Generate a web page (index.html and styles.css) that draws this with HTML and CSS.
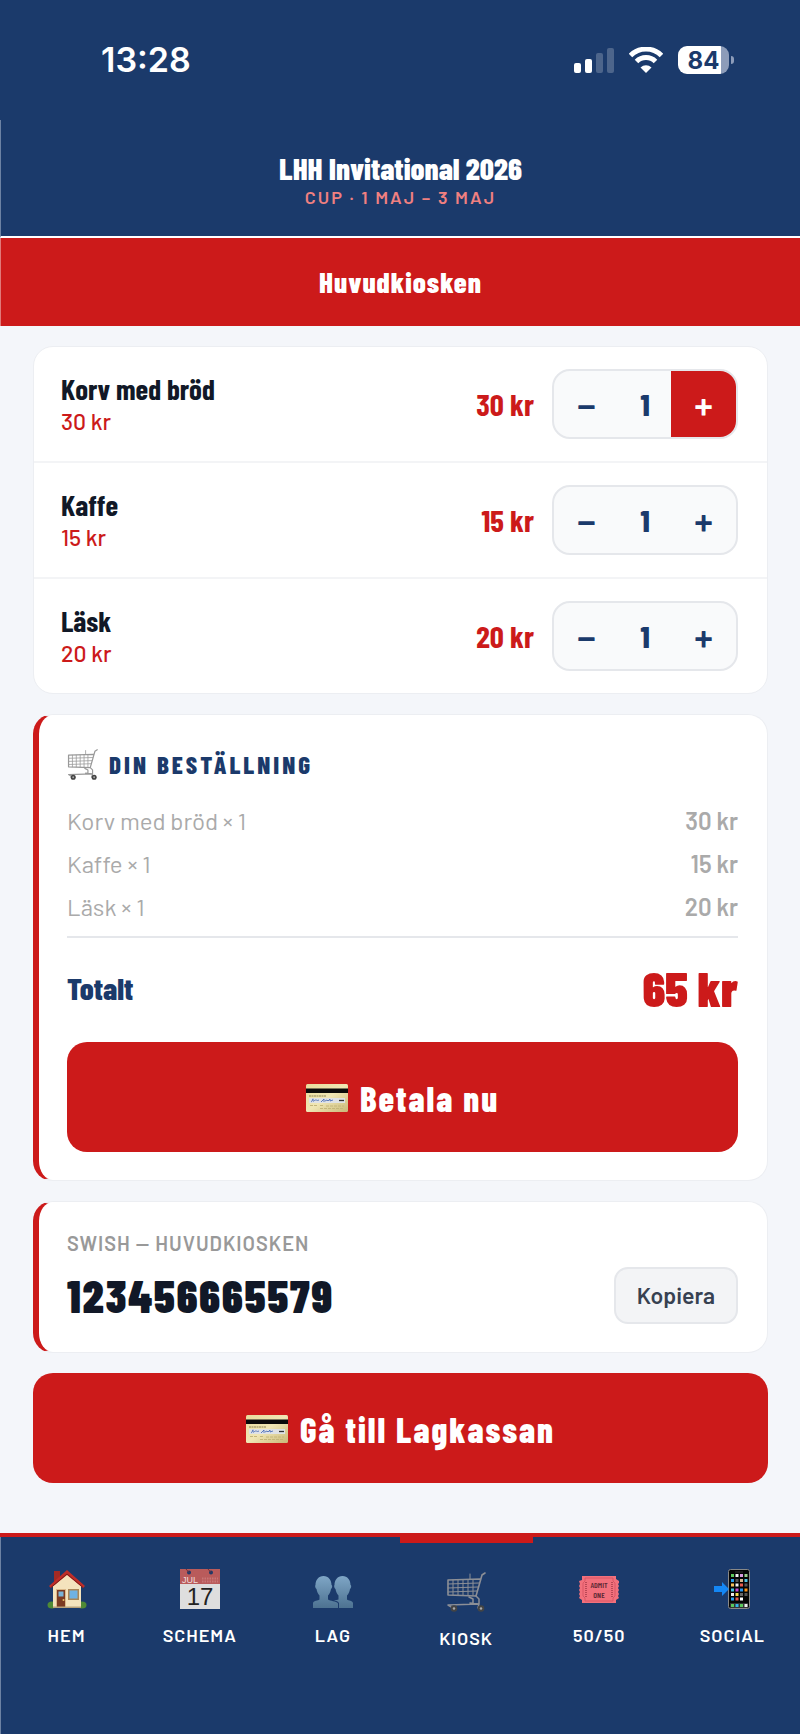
FILE: index.html
```html
<!DOCTYPE html>
<html lang="sv">
<head>
    <meta charset="UTF-8">
    <meta name="viewport" content="width=device-width, initial-scale=1">
    <title>LHH Invitational 2026 - Huvudkiosken</title>
    <link rel="stylesheet" href="styles.css">
</head>
<body>
    <!-- shared icons -->
    <svg class="sprite" width="0" height="0" aria-hidden="true">
        <symbol id="icon-cart" viewBox="0 0 40 40">
            <g fill="none" stroke="currentColor" stroke-linecap="round" stroke-linejoin="round">
                <path d="M39 1l-3 2-6 21-28-1V8l32-1" stroke-width="1.6"/>
                <path d="M2 12l31-1M2 16l30-1M2 20l29-1M7 8v15M12 8v15M17 8v15M22 8v15M27 8v15M24 7V2" stroke-width="1"/>
                <path d="M23 25l4 2v4M30 24l3 3v5L2 33l5 3M24 31l9 1-1 4" stroke-width="1.5"/>
            </g>
            <g fill="#444">
                <circle cx="8" cy="36.500" r="3.300"/>
                <circle cx="35" cy="36.500" r="3.300"/>
            </g>
            <circle cx="8" cy="36.500" r="1.200" fill="#aaa"/>
            <circle cx="35" cy="36.500" r="1.200" fill="#aaa"/>
        </symbol>
        <symbol id="icon-card" viewBox="0 0 42 28">
            <linearGradient id="gold" x1="0" y1="0" x2="1" y2="1">
                <stop offset="0" stop-color="#e9dc9c"/>
                <stop offset="0.5" stop-color="#f0e6b4"/>
                <stop offset="1" stop-color="#c9b877"/>
            </linearGradient>
            <rect width="42" height="28" rx="1.500" fill="url(#gold)"/>
            <rect y="4.500" width="42" height="4.500" fill="#0a0a0a"/>
            <path d="M3 12h17" stroke="#8d8352" stroke-width="1" stroke-dasharray="2 .5"/>
            <rect x="3" y="14" width="36" height="5" fill="#dfe2e6"/>
            <path d="M5 18c1 0 2-4 2-3s0 3 1 2 1-1 2-1 1 1 3 0M15 18l3-3v3M19 17l2-1 1 1 2-2v2l3-1" fill="none" stroke="#3c62b4" stroke-width=".8"/>
            <path d="M33 16.500h5" stroke="#333" stroke-width="1.300"/>
            <path d="M4 21.500h7M14 21.500h4M14 24.500h24M20 22h18" stroke="#c4b67a" stroke-width="1" stroke-dasharray="3 1"/>
        </symbol>
    </svg>

    <div class="statusbar">
        <span class="clock">13:28</span>
        <div class="status-icons">
            <svg width="40" height="26" viewBox="0 0 40 26" fill="#fff" aria-hidden="true">
                <rect y="16" width="7" height="10" rx="2"/>
                <rect x="11" y="12" width="7" height="14" rx="2"/>
                <rect x="22" y="6" width="7" height="20" rx="2" opacity=".22"/>
                <rect x="33" y="1" width="7" height="25" rx="2" opacity=".22"/>
            </svg>
            <svg width="34" height="26" viewBox="0 0 34 26" aria-hidden="true">
                <g fill="none" stroke="#fff" stroke-width="5">
                    <path d="M1.500 8.500a22 22 0 0 1 31 0"/>
                    <path d="M7.500 14.500a13.500 13.500 0 0 1 19 0"/>
                </g>
                <path d="M11.500 20.500a8 8 0 0 1 11 0L17 26z" fill="#fff"/>
            </svg>
            <span class="battery">84</span>
        </div>
    </div>

    <header class="header">
        <h1>LHH Invitational 2026</h1>
        <p>CUP · 1 MAJ – 3 MAJ</p>
    </header>

    <div class="banner">
        <h2>Huvudkiosken</h2>
    </div>

    <main class="content">
        <section class="card products">
            <div class="product">
                <div class="product-info">
                    <h3>Korv med bröd</h3>
                    <p>30 kr</p>
                </div>
                <span class="product-sum">30 kr</span>
                <div class="stepper">
                    <button type="button" aria-label="Minska">−</button>
                    <output>1</output>
                    <button type="button" class="pressed" aria-label="Öka">+</button>
                </div>
            </div>
            <div class="product">
                <div class="product-info">
                    <h3>Kaffe</h3>
                    <p>15 kr</p>
                </div>
                <span class="product-sum">15 kr</span>
                <div class="stepper">
                    <button type="button" aria-label="Minska">−</button>
                    <output>1</output>
                    <button type="button" aria-label="Öka">+</button>
                </div>
            </div>
            <div class="product">
                <div class="product-info">
                    <h3>Läsk</h3>
                    <p>20 kr</p>
                </div>
                <span class="product-sum">20 kr</span>
                <div class="stepper">
                    <button type="button" aria-label="Minska">−</button>
                    <output>1</output>
                    <button type="button" aria-label="Öka">+</button>
                </div>
            </div>
        </section>

        <section class="card accent">
            <h2 class="order-title">
                <svg width="31" height="31" aria-hidden="true"><use href="#icon-cart"/></svg>
                DIN BESTÄLLNING
            </h2>
            <ul class="order-lines">
                <li><span>Korv med bröd × 1</span><strong>30 kr</strong></li>
                <li><span>Kaffe × 1</span><strong>15 kr</strong></li>
                <li><span>Läsk × 1</span><strong>20 kr</strong></li>
            </ul>
            <div class="total">
                <span>Totalt</span>
                <strong>65 kr</strong>
            </div>
            <button type="button" class="btn-primary">
                <svg width="42" height="28" aria-hidden="true"><use href="#icon-card"/></svg>
                Betala nu
            </button>
        </section>

        <section class="card accent">
            <p class="swish-label">SWISH — HUVUDKIOSKEN</p>
            <div class="swish-row">
                <span class="swish-number">123456665579</span>
                <button type="button" class="btn-copy">Kopiera</button>
            </div>
        </section>

        <button type="button" class="btn-primary">
            <svg width="42" height="28" aria-hidden="true"><use href="#icon-card"/></svg>
            Gå till Lagkassan
        </button>
    </main>

    <nav class="tabbar">
        <a href="#hem">
            <svg width="40" height="40" viewBox="0 0 40 40" aria-hidden="true">
                <ellipse cx="5" cy="36" rx="4.500" ry="3.500" fill="#4f8a35"/>
                <ellipse cx="35" cy="36" rx="4.500" ry="3.500" fill="#4f8a35"/>
                <path d="M7 2h6v13H7z" fill="#a32a23"/>
                <path d="M6 15L20 4l14 11v24H6z" fill="#f4e3bd"/>
                <path d="M2 17L20 1l18 16-2 2L20 6 4 19z" fill="#bf2d28"/>
                <path d="M4 18.500L20 5l16 13.500" fill="none" stroke="#7c1b18" stroke-width="1"/>
                <path d="M9 20h10v18H9z" fill="#dbb98a"/>
                <path d="M10 21h8v17h-8z" fill="#7b3a22"/>
                <path d="M11.500 22.500h5v5h-5z" fill="#79b4d9"/>
                <circle cx="16.500" cy="31" r="1" fill="#e9c46a"/>
                <path d="M21 20h11v11H21z" fill="#a98657"/>
                <path d="M22.500 21.500h8v8h-8z" fill="#6fb2e3"/>
                <path d="M6 37.500h28V39H6z" fill="#b9a27a"/>
            </svg>
            <span>HEM</span>
        </a>
        <a href="#schema">
            <svg width="40" height="40" viewBox="0 0 40 40" aria-hidden="true">
                <rect width="40" height="40" fill="#dedede"/>
                <rect width="40" height="15" fill="#b95b5b"/>
                <circle cx="9" cy="3.500" r="2" fill="#1b3a6b"/>
                <circle cx="31" cy="3.500" r="2" fill="#1b3a6b"/>
                <path d="M6 0l3 3.500M28 0l3 3.500" stroke="#772f35"/>
                <text x="2" y="13.500" class="cal-month">JUL</text>
                <path d="M22 9.500h16M22 12.500h16" stroke="#c87676" stroke-width="2" stroke-dasharray="1.500 1"/>
                <text x="20" y="36" class="cal-day">17</text>
            </svg>
            <span>SCHEMA</span>
        </a>
        <a href="#lag">
            <svg width="40" height="40" viewBox="0 0 40 40" aria-hidden="true">
                <linearGradient id="people" x1="0" y1="0" x2="0" y2="1">
                    <stop offset="0" stop-color="#7fa6c6"/>
                    <stop offset="1" stop-color="#4d7291"/>
                </linearGradient>
                <g fill="url(#people)">
                    <path d="M10.500 7c5 0 8 4 8 9 1 0 1 3-.5 4-.5 3-1.500 5-3 6.500v4c2 2 8 1 10 4v4.500H0V34c1-3 5-2 6.500-3.500v-4C5 25 4 23 3.500 20 2 19 2 16 2.500 16c0-5 3-9 8-9z"/>
                    <path d="M29.500 7c5 0 8 4 8 9 1 0 1 3-.5 4-.5 3-1.500 5-3 6.500v4c1.500 1.500 5 .5 6 3.500v5H26V34c-1-2-4-2.500-5-3 2 0 3.500 0 4.500-.5v-4c-1.500-1.500-2.500-3.500-3-6.500-1.500-1-1.500-4-1-4 0-5 3-9 8-9z"/>
                </g>
            </svg>
            <span>LAG</span>
        </a>
        <a href="#kiosk" class="active">
            <svg width="40" height="40" aria-hidden="true"><use href="#icon-cart"/></svg>
            <span>KIOSK</span>
        </a>
        <a href="#lotteri">
            <svg width="40" height="40" viewBox="0 0 40 40" aria-hidden="true">
                <path d="M3 7h34v3l3 2v2l-1 1 1 2-1 2 1 2-1 2 1 2-1 2 1 2-3 2v3H3v-3l-3-2 1-2-1-2 1-2-1-2 1-2-1-2 1-2-1-3 3-1z" fill="#f2707c"/>
                <path d="M6 9h28v3l2 2v13l-2 2v3H6v-3l-2-2V14l2-2z" fill="none" stroke="#d4505f" stroke-width=".8"/>
                <path d="M7 13v15M33 13v15" stroke="#a63b49" stroke-width="1.500" stroke-dasharray="1 1"/>
                <text x="20" y="18.500" class="ticket-text">ADMIT</text>
                <text x="20" y="28.500" class="ticket-text">ONE</text>
            </svg>
            <span>50/50</span>
        </a>
        <a href="#social">
            <svg width="40" height="40" viewBox="0 0 40 40" aria-hidden="true">
                <rect x="16.500" y=".5" width="21" height="39" rx="2" fill="#050505" stroke="#888"/>
                <path d="M23 3h8" stroke="#333"/>
                <g fill="none" stroke-width="3">
                    <path d="M19 6.500h3" stroke="#5bc95b"/><path d="M23.500 6.500h3" stroke="#eee"/><path d="M28 6.500h3" stroke="#d99be0"/><path d="M32.500 6.500h3" stroke="#9ad18b"/>
                    <path d="M19 11.500h3" stroke="#2a9ff0"/><path d="M23.500 11.500h3" stroke="#555"/><path d="M28 11.500h3" stroke="#d8b68c"/><path d="M32.500 11.500h3" stroke="#4ec7e8"/>
                    <path d="M19 16h3" stroke="#f5c05a"/><path d="M23.500 16h3" stroke="#eee"/><path d="M28 16h3" stroke="#e75a4d"/><path d="M32.500 16h3" stroke="#555"/>
                    <path d="M19 21h3" stroke="#44c4e4"/><path d="M23.500 21h3" stroke="#c648d8"/><path d="M28 21h3" stroke="#2695ee"/><path d="M32.500 21h3" stroke="#ff9417"/>
                    <path d="M19 25.500h3" stroke="#eee"/><path d="M23.500 25.500h3" stroke="#f4dc52"/><path d="M28 25.500h3" stroke="#666"/><path d="M32.500 25.500h3" stroke="#555"/>
                    <path d="M19 30h3" stroke="#2a9ff0"/><path d="M23.500 30h3" stroke="#e75a4d"/><path d="M28 30h3" stroke="#fff"/>
                </g>
                <path d="M18 34h18v5H18z" fill="#333"/>
                <g fill="none" stroke-width="3">
                    <path d="M19 36.500h3" stroke="#5bc95b"/><path d="M23.500 36.500h3" stroke="#35b5e8"/><path d="M28 36.500h3" stroke="#5bc95b"/><path d="M32.500 36.500h3" stroke="#eee"/>
                </g>
                <path d="M2 17h8v-4l7 7-7 7v-4H2z" fill="#1487f5"/>
            </svg>
            <span>SOCIAL</span>
        </a>
    </nav>
</body>
</html>
```
FILE: styles.css
```css
:root {
    --navy: #1b3a6b;
    --red: #cc1a1a;
    --ink: #111827;
    --line: #e5e7eb;
    --condensed: "Barlow Condensed", "Roboto Condensed", "Liberation Sans Narrow", Roboto, sans-serif;
}
* {
    box-sizing: border-box;
}
body {
    display: flex;
    flex-direction: column;
    min-height: 100vh;
    margin: 0;
    background: #f4f6fa;
    color: var(--ink);
    font-family: Barlow, Roboto, sans-serif;
}
h1, h2, h3, p, ul {
    margin: 0;
    padding: 0;
}
button {
    border: 0;
    font-family: inherit;
    cursor: pointer;
}
.sprite {
    position: absolute;
}

/* status bar */
.statusbar {
    display: flex;
    justify-content: space-between;
    align-items: center;
    height: 120px;
    padding: 0 71px 0 101px;
    background: var(--navy);
    color: #fff;
}
.clock {
    font: 600 34px/40px Inter, sans-serif;
}
.status-icons {
    display: flex;
    align-items: center;
    gap: 15px;
}
.battery {
    position: relative;
    width: 51px;
    height: 28px;
    border-radius: 9px;
    background: linear-gradient(to right, #fff 84%, #8d9cb9 84%);
    color: var(--navy);
    font: 700 24px/29px Inter, sans-serif;
    text-align: center;
}
.battery::after {
    content: "";
    position: absolute;
    top: 10px;
    right: -5px;
    width: 3px;
    height: 8px;
    border-radius: 0 3px 3px 0;
    background: #8d9cb9;
}

/* header */
.header {
    padding: 32px 0 26px;
    border-left: 1px solid #6d82a3;
    border-bottom: 2px solid #fff;
    background: var(--navy);
    text-align: center;
}
.header h1 {
    color: #fff;
    font: 800 31px/32px var(--condensed);
}
.header p {
    color: #f08080;
    font-size: 18px;
    font-weight: 600;
    line-height: 26px;
    letter-spacing: 2px;
}
.banner {
    padding: 24px 0;
    border-left: 1px solid #e07a7a;
    background: var(--red);
    color: #fff;
    text-align: center;
}
.banner h2 {
    font: 800 29px/40px var(--condensed);
    letter-spacing: 1px;
}

/* cards */
.content {
    flex: 1;
    display: flex;
    flex-direction: column;
    gap: 20px;
    padding: 20px 32px 48px 33px;
}
.card {
    border: 1px solid #eceef2;
    border-radius: 20px;
    background: #fff;
}
.accent {
    padding: 28px 29px 28px 28px;
    border-left: 6px solid var(--red);
}
.product {
    display: flex;
    align-items: center;
    padding: 22px 29px 22px 27px;
}
.product + .product {
    border-top: 2px solid #f3f4f6;
}
.product-info {
    flex: 1;
}
.product-info h3 {
    font: 700 29px/34px var(--condensed);
}
.product-info p {
    color: var(--red);
    font-size: 23px;
    font-weight: 500;
    line-height: 30px;
}
.product-sum {
    margin-right: 18px;
    color: var(--red);
    font: 700 31px/36px var(--condensed);
}
.stepper {
    display: flex;
    height: 70px;
    border: 2px solid var(--line);
    border-radius: 18px;
    background: #f9fafb;
    overflow: hidden;
}
.stepper button {
    width: 65px;
    padding: 0;
    background: none;
    color: var(--navy);
    font-size: 38px;
    font-weight: 600;
}
.stepper .pressed {
    background: var(--red);
    color: #fff;
}
.stepper output {
    width: 52px;
    color: var(--navy);
    font: 800 31px/66px var(--condensed);
    text-align: center;
}

/* order */
.order-title {
    display: flex;
    align-items: center;
    gap: 11px;
    color: var(--navy);
    font: 800 25px/42px var(--condensed);
    letter-spacing: 3px;
}
.order-title svg {
    color: #999;
}
.order-lines {
    margin-top: 14px;
    padding-bottom: 8px;
    border-bottom: 2px solid var(--line);
    list-style: none;
}
.order-lines li {
    display: flex;
    justify-content: space-between;
    color: #aaa;
    font-size: 24px;
    line-height: 43px;
}
.order-lines strong {
    font-weight: 600;
}
.total {
    display: flex;
    justify-content: space-between;
    align-items: center;
    padding: 22px 0 26px;
    color: var(--navy);
    font: 800 31px/56px var(--condensed);
}
.total strong {
    color: var(--red);
    font-size: 49px;
    font-weight: 900;
}
.btn-primary {
    display: flex;
    justify-content: center;
    align-items: center;
    gap: 12px;
    width: 100%;
    padding: 36px 0 34px;
    border-radius: 20px;
    background: var(--red);
    color: #fff;
    font: 800 35px/40px var(--condensed);
    letter-spacing: 2px;
}

/* swish */
.swish-label {
    color: #999;
    font-size: 20px;
    font-weight: 600;
    line-height: 26px;
    letter-spacing: 1px;
}
.swish-row {
    display: flex;
    justify-content: space-between;
    align-items: flex-start;
    margin-top: 11px;
}
.swish-number {
    font: 900 45px/56px var(--condensed);
    letter-spacing: 2px;
}
.btn-copy {
    padding: 12px 21px;
    border: 2px solid var(--line);
    border-radius: 14px;
    background: #f3f4f6;
    color: #374151;
    font-size: 23px;
    font-weight: 600;
    line-height: 29px;
}

/* bottom navigation */
.tabbar {
    display: flex;
    padding-right: 1px;
    border-top: 4px solid var(--red);
    background: var(--navy);
    box-shadow: inset 1px 0 #6d82a3;
}
.tabbar a {
    flex: 1;
    display: flex;
    flex-direction: column;
    align-items: center;
    gap: 13px;
    padding: 32px 0 86px;
    color: #fff;
    font-size: 18px;
    font-weight: 600;
    line-height: 26px;
    letter-spacing: 1px;
    text-decoration: none;
}
.tabbar .active {
    padding: 29px 0 83px;
    border-top: 6px solid var(--red);
}
.active svg {
    color: #8c8f96;
}
.cal-month {
    fill: #f1dede;
    font: 9px "Liberation Sans", sans-serif;
    letter-spacing: 0;
}
.cal-day {
    fill: #222;
    font: 24px "Liberation Sans", sans-serif;
    letter-spacing: 0;
    text-anchor: middle;
}
.ticket-text {
    fill: #5e2a35;
    font: 600 8px var(--condensed);
    letter-spacing: 0;
    text-anchor: middle;
}
```
